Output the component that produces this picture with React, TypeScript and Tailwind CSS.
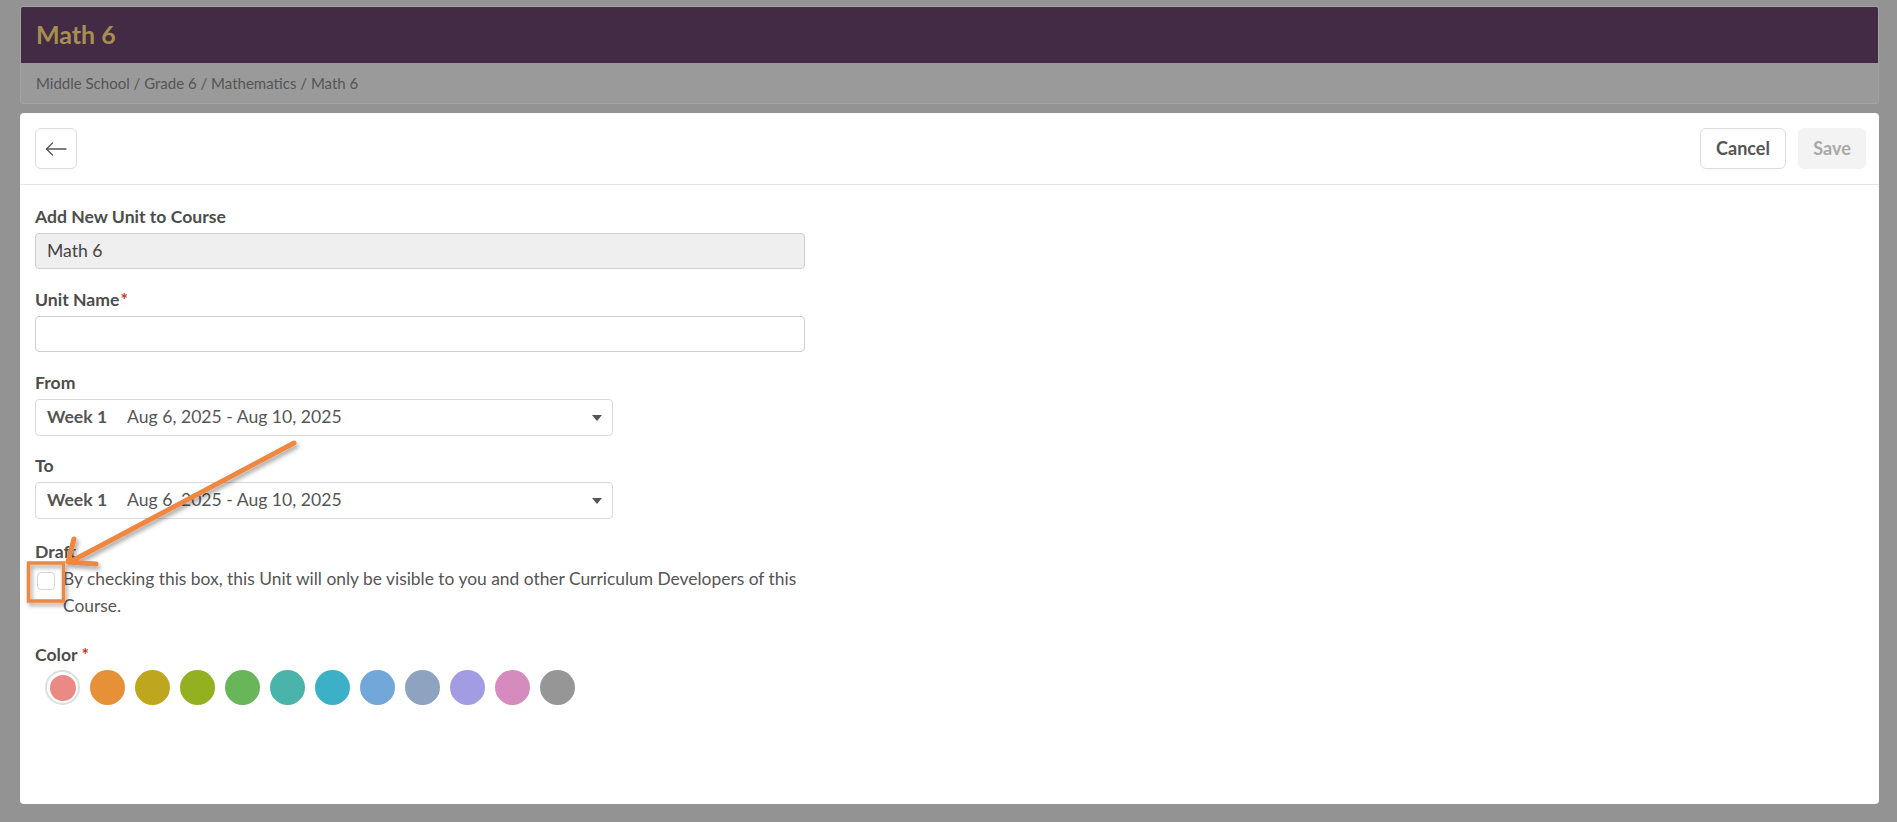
const colors = [
  '#eb8a85',
  '#e69138',
  '#bea61f',
  '#93b021',
  '#69b65a',
  '#4ab3aa',
  '#3cb0c6',
  '#72a8d9',
  '#8ea3c0',
  '#a29de2',
  '#d68bbe',
  '#969696',
]

function Label({ children, required }: { children: React.ReactNode; required?: boolean }) {
  return (
    <div className="mb-1 h-6 text-[17.6px] leading-6 font-bold text-[#4d4d4d]">
      {children}
      {required && <span className="ml-[1px] text-[#c0392b]">*</span>}
    </div>
  )
}

function WeekSelect() {
  return (
    <div className="flex h-[37px] w-[578px] items-center rounded-[4px] border border-[#d9d9d9] bg-white pl-[11px] pr-[10px] text-[17.6px] text-[#555]">
      <span className="font-bold">Week 1</span>
      <span className="ml-[20px]">Aug 6, 2025 - Aug 10, 2025</span>
      <span className="ml-auto h-0 w-0 border-x-[5px] border-t-[6px] border-x-transparent border-t-[#555]" />
    </div>
  )
}

export default function App() {
  return (
    <div className="relative flex h-[822px] w-full flex-col gap-[9px] overflow-hidden bg-[#939393] pt-[6px] pr-[18px] pb-[18px] pl-[20px] font-['Lato',sans-serif]">
      {/* course header */}
      <div className="h-[98px] shrink-0 overflow-hidden rounded-[3px] border border-[#a3a3a3] bg-[#9a9a9a]">
        <div className="flex h-[56px] items-center bg-[#432b45] px-[15px]">
          <h1 className="text-[25px] font-bold text-[#a78f4f]">Math 6</h1>
        </div>
        <div className="flex h-[41px] items-center px-[15px] text-[15px] text-[#555]">
          Middle School / Grade 6 / Mathematics / Math 6
        </div>
      </div>

      {/* form card */}
      <div className="flex-1 rounded-[4px] bg-white">
        <div className="flex items-center justify-between border-b border-[#e6e6e6] py-[15px] pr-[13px] pl-[15px]">
          <button className="flex h-[41px] w-[42px] items-center justify-center rounded-[6px] border border-[#dcdcdc] text-[#555]">
            <svg width="22" height="14" viewBox="0 0 22 14" fill="none" stroke="currentColor" strokeWidth="1.3" strokeLinecap="round" strokeLinejoin="round">
              <path d="M21 7H1.5" />
              <path d="M7.5 1L1.5 7l6 6" />
            </svg>
          </button>
          <div className="flex gap-[12px]">
            <button className="h-[41px] w-[86px] rounded-[6px] border border-[#dcdcdc] text-[18px] font-bold text-[#555]">
              Cancel
            </button>
            <button className="h-[41px] w-[68px] rounded-[6px] bg-[#f3f3f3] text-[18px] font-bold text-[#a9a9a9]">
              Save
            </button>
          </div>
        </div>

        <div className="w-[785px] px-[15px] pt-[20px]">
          <div className="mb-[19px]">
            <Label>Add New Unit to Course</Label>
            <div className="flex h-[36px] w-[770px] items-center rounded-[4px] border border-[#cfcfcf] bg-[#efefef] px-[11px] text-[17.6px] text-[#444]">
              Math 6
            </div>
          </div>

          <div className="mb-[19px]">
            <Label required>Unit Name</Label>
            <div className="h-[36px] w-[770px] rounded-[4px] border border-[#cfcfcf] bg-white" />
          </div>

          <div className="mb-[18px]">
            <Label>From</Label>
            <WeekSelect />
          </div>

          <div className="mb-[21px]">
            <Label>To</Label>
            <WeekSelect />
          </div>

          <div className="mb-[24px]">
            <Label>Draft</Label>
            <div className="-mt-[3px] flex items-start">
              <span className="mt-[7px] ml-[2px] h-[18px] w-[18px] shrink-0 rounded-[4px] border border-[#d6d6d6] bg-white" />
              <p className="ml-[8px] w-[756px] shrink-0 text-[17.4px] leading-[27px] text-[#555]">
                By checking this box, this Unit will only be visible to you and other Curriculum Developers of this
                <br />
                Course.
              </p>
            </div>
          </div>

          <div>
            <div className="h-6 text-[17.6px] leading-6 font-bold text-[#4d4d4d]">
              Color <span className="text-[#c0392b]">*</span>
            </div>
            <div className="mt-[3px] ml-[10px] flex gap-[10px]">
              {colors.map((c, i) =>
                i === 0 ? (
                  <span
                    key={c}
                    className="flex h-[35px] w-[35px] items-center justify-center rounded-full border-[2px] border-[#dedede]"
                  >
                    <span className="h-[26px] w-[26px] rounded-full" style={{ backgroundColor: c }} />
                  </span>
                ) : (
                  <span key={c} className="h-[35px] w-[35px] rounded-full" style={{ backgroundColor: c }} />
                ),
              )}
            </div>
          </div>
        </div>
      </div>

      {/* annotation: arrow pointing at the draft checkbox */}
      <svg className="pointer-events-none absolute top-0 left-0" width="1897" height="822">
        <defs>
          <filter id="shade" x="-20%" y="-20%" width="140%" height="140%">
            <feDropShadow dx="2" dy="3" stdDeviation="2" floodColor="#000" floodOpacity="0.35" />
          </filter>
        </defs>
        <g filter="url(#shade)" stroke="#f0873f" fill="none">
          <g strokeLinecap="round" strokeLinejoin="round">
            <line x1="294" y1="443" x2="70" y2="562" strokeWidth="5" />
            <polyline points="74,539 68,562 96,564" strokeWidth="5" />
          </g>
          <rect x="28.5" y="563" width="35" height="38" strokeWidth="3.5" />
        </g>
      </svg>
    </div>
  )
}
